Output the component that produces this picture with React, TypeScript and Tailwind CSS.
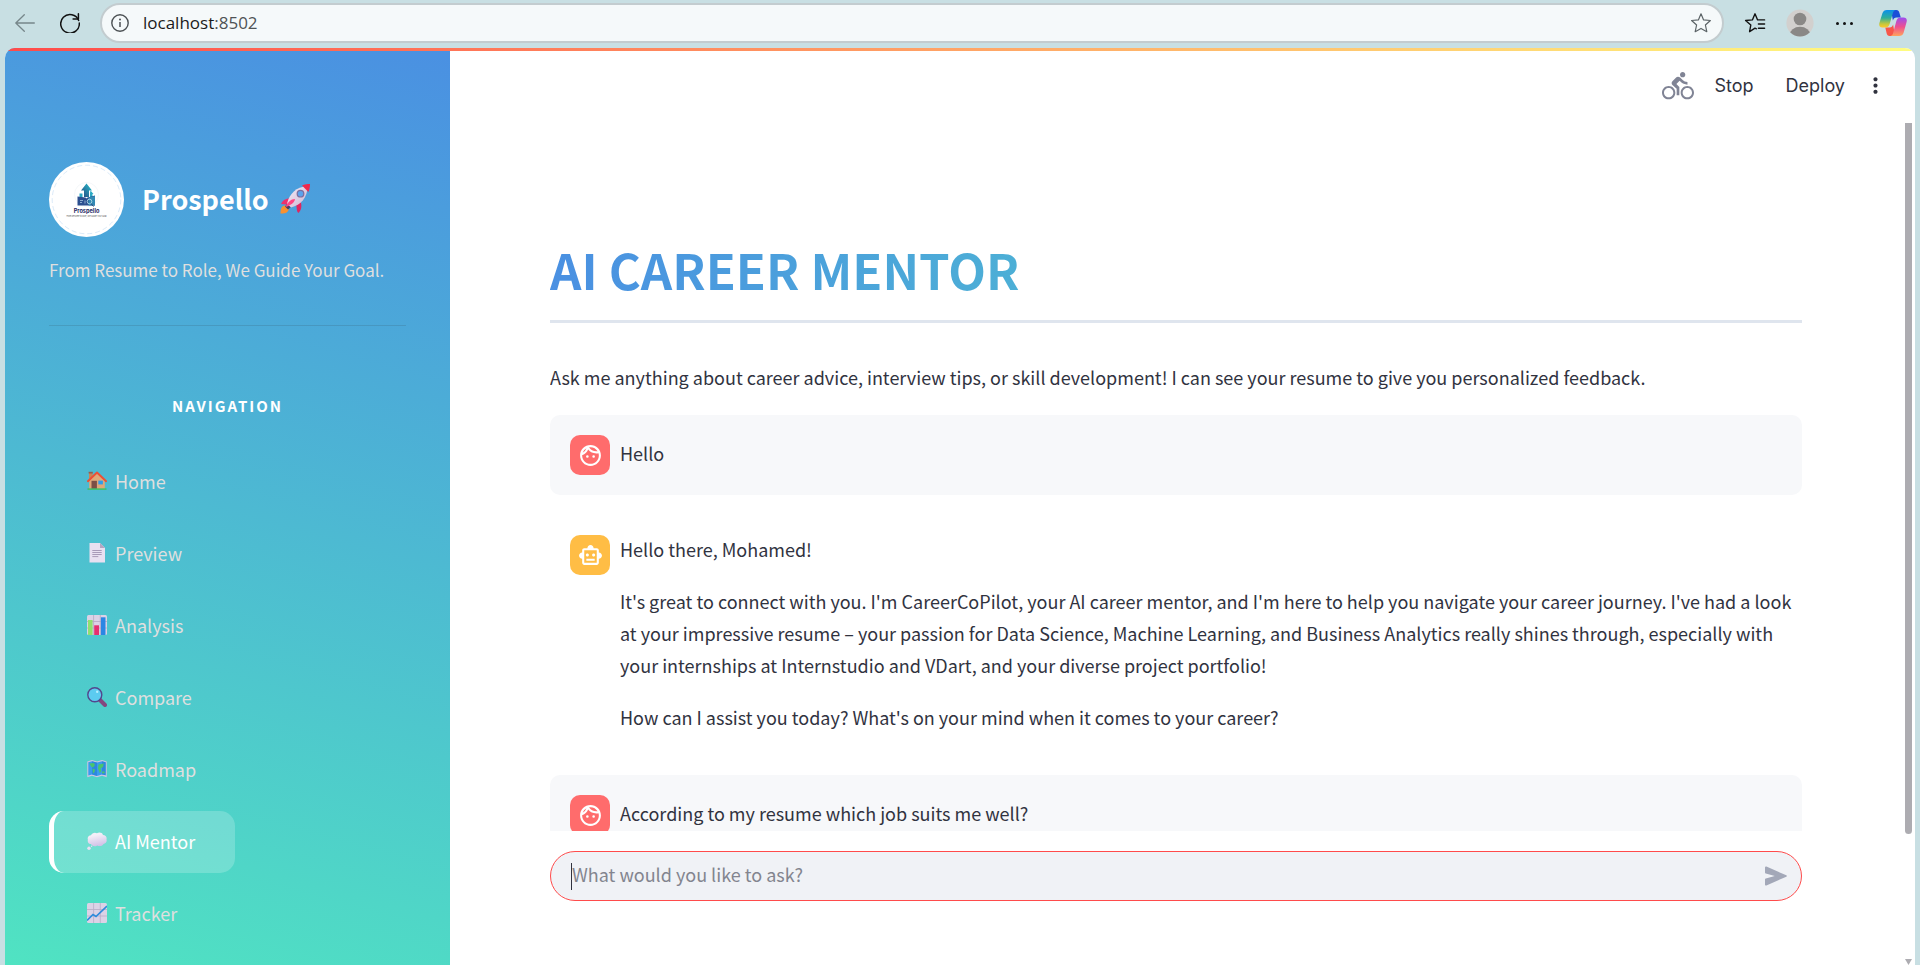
import React from "react";
import { MdDirectionsBike, MdMoreVert, MdOutlineFace, MdOutlineSmartToy } from "react-icons/md";

type IconProps = { className?: string };

function BackIcon() {
  return (
    <svg viewBox="0 0 20 18" className="h-[18px] w-5" fill="none" stroke="#76868a" strokeWidth="1.3" strokeLinecap="round" strokeLinejoin="round">
      <path d="M19.3 9H.8M9.3.7.8 9l8.5 8.3" />
    </svg>
  );
}

function ReloadIcon() {
  return (
    <svg viewBox="0 0 20 20" className="h-5 w-5" fill="none" stroke="#111" strokeWidth="1.5" strokeLinecap="round" strokeLinejoin="round">
      <path d="M18.7 7.4A9.3 9.3 0 1 0 19.3 10" />
      <path d="M18.4.8v5.2h-5.3" />
    </svg>
  );
}

function InfoIcon() {
  return (
    <svg viewBox="0 0 18 18" className="h-[18px] w-[18px]" fill="none" stroke="#4c5154" strokeWidth="1.4">
      <circle cx="9" cy="9" r="8.2" />
      <path d="M9 8v5" strokeWidth="1.5" />
      <circle cx="9" cy="5.5" r="1" fill="#4c5154" stroke="none" />
    </svg>
  );
}

function StarIcon() {
  return (
    <svg viewBox="0 0 22 22" className="h-[22px] w-[22px]" fill="none" stroke="#5c6467" strokeWidth="1.2" strokeLinejoin="round">
      <path d="M11 1.8 13.6 7.9 20.4 8.5 15.4 13 16.8 19.7 11 16.4 5.2 19.7 6.6 13 1.6 8.5 8.4 7.9Z" />
    </svg>
  );
}

function FavoritesIcon() {
  return (
    <svg viewBox="0 0 22 22" className="h-[22px] w-[22px]" fill="none" stroke="#111" strokeWidth="1.4" strokeLinecap="round" strokeLinejoin="round">
      <path d="M12.4 16.8 11 16.2 5.6 19.7 6.8 13 1.6 8.5 8.4 7.9 11 1.8 13.6 7.9H20.6M14.4 12H20.6M14.4 16.2H20.6" />
    </svg>
  );
}

function ProfileIcon() {
  return (
    <svg viewBox="0 0 28 28" className="h-7 w-7">
      <defs>
        <clipPath id="profile-clip"><circle cx="14" cy="14" r="13.6" /></clipPath>
      </defs>
      <circle cx="14" cy="14" r="13.6" fill="#d2d0ce" />
      <g clipPath="url(#profile-clip)" fill="#8a8886">
        <circle cx="14" cy="10" r="6.3" />
        <ellipse cx="14" cy="26" rx="10.4" ry="8.2" />
      </g>
    </svg>
  );
}

function CopilotIcon() {
  return (
    <svg viewBox="0 0 28 26" className="h-[26px] w-7">
      <defs>
        <linearGradient id="cp-left" x1="0" y1="0" x2="0" y2="1">
          <stop offset="0" stopColor="#0b8fec" />
          <stop offset=".45" stopColor="#2fae9a" />
          <stop offset=".8" stopColor="#c7c83a" />
          <stop offset="1" stopColor="#ffc82c" />
        </linearGradient>
        <linearGradient id="cp-right" x1="0" y1="0" x2="0" y2="1">
          <stop offset="0" stopColor="#9b4df0" />
          <stop offset=".5" stopColor="#ee5090" />
          <stop offset="1" stopColor="#ffa35c" />
        </linearGradient>
      </defs>
      <path d="M12 0h5.5c1.6 0 2.4 1.1 2.8 2.5L21.8 7.5H17.5c-2 0-3 1-3.6 3z" fill="#1b4fd8" />
      <path d="M16 26h-5.5c-1.6 0-2.4-1.1-2.8-2.5L6.3 17.5H10.5c2 0 3-1 3.6-3z" fill="#f7574a" />
      <path d="M8 0H16.5c-1.5.4-2.2 1.6-2.7 3.3L10.8 13.5c-.8 2.7-1.8 4-4.5 4H3.5C.8 17.5-.3 15.500.4 13L3.4 3.3C4.1 1.2 5.6 0 8 0z" fill="url(#cp-left)" />
      <path d="M20 26H11.5c1.5-.4 2.2-1.6 2.7-3.3L17.2 11.5c.8-2.7 1.8-4 4.500-4H24.5c2.7 0 3.8 2 3.1 4.5L24.6 22.7C23.900 24.8 22.4 26 20 26z" fill="url(#cp-right)" />
    </svg>
  );
}

function SendIcon() {
  return (
    <svg viewBox="0 0 22 20" className="h-5 w-[22px]" fill="#a3a8b8">
      <path d="M0 1.4C0 .6.7.2 1.4.5L21.3 9.3c.7.3.7 1.1 0 1.4L1.4 19.5C.7 19.8 0 19.4 0 18.6V13.4c0-.5.3-.9.8-1L9.8 10 .8 7.6C.3 7.5 0 7.1 0 6.6z" />
    </svg>
  );
}

function RocketIcon({ className }: IconProps) {
  return (
    <svg viewBox="0 0 32 32" className={className}>
      <defs>
        <linearGradient id="rk-body" x1="0" y1="0" x2="1" y2="1">
          <stop offset="0" stopColor="#f6ecf8" />
          <stop offset="1" stopColor="#c9b4d0" />
        </linearGradient>
      </defs>
      <path d="M6.5 22.5C2.5 22.5 1.5 26 1.5 30.5 6 30.8 9.5 29.5 9.8 26z" fill="#f9912f" />
      <path d="M11.5 15.5C6.5 15 3.5 17.5 2 21l7 .8z" fill="#ee2f6b" />
      <path d="M16.5 20c1.8 3.5.5 7.5 2.8 10 3-2.5 4-7 2.2-12z" fill="#e02660" />
      <path d="M6 23.5 9 26.5 12 24 8.5 20.5z" fill="#4a3f62" />
      <path d="M8 20.5C10.5 11 17 3.500 28.5 3.5 28.5 14.5 22 22 12 24.5z" fill="url(#rk-body)" />
      <path d="M23 2.6C25.5 1.3 28.5 1 31 1 31 3.5 30.6 6.5 29.4 9z" fill="#f0284c" />
      <circle cx="21.5" cy="10.7" r="3.9" fill="#7c6d9e" />
      <circle cx="21.5" cy="10.7" r="2.7" fill="#5aa2ec" />
      <path d="M16 16c-4 0-7.500 3.500-9.500 8C11 22.5 15.500 20 16 16z" fill="#ff4684" />
    </svg>
  );
}

function HomeEmoji() {
  return (
    <svg viewBox="0 0 20 20" className="h-5 w-5">
      <path d="M2 1.6h3.6v6H2z" fill="#c98555" />
      <path d="M1.6.8h4.2v1.7H1.6z" fill="#8f5f54" />
      <path d="M2.2 9.5 10 2.500l7.8 7V18H2.2z" fill="#e0a878" />
      <path d="M4.5 9.8h5.4V18H4.5z" fill="#7c4f45" />
      <path d="M11.3 9.6h4.6v3.8h-4.6z" fill="#2f9cec" />
      <path d="M.9 10.2 10 1.5l9.1 8.7" fill="none" stroke="#ee4f35" strokeWidth="1.9" strokeLinecap="round" strokeLinejoin="round" />
      <path d="M.5 17.3h19v1.6H.5z" fill="#43c168" />
    </svg>
  );
}

function PageEmoji() {
  return (
    <svg viewBox="0 0 20 20" className="h-5 w-5">
      <path d="M2.5 0H13l5 5v14.5H2.5z" fill="#e9e0f1" />
      <path d="M13 0l5 5h-5z" fill="#b4a6c2" />
      <path d="M5.3 7.5h9.4M5.3 9.5h9.4M5.3 11.5h9.4M5.3 13.6h6" stroke="#a99ab8" strokeWidth="1" />
    </svg>
  );
}

function ChartEmoji() {
  return (
    <svg viewBox="0 0 20 20" className="h-5 w-5">
      <rect width="20" height="20" rx="1.5" fill="#dcd2e6" />
      <path d="M0 6.5h20M0 13h20M6.6 0v20M13.3 0v20" stroke="#b5a8c2" strokeWidth=".8" />
      <path d="M1 5h4.6v15H1z" fill="#8fe070" />
      <path d="M7.2 10.3H12V20H7.2z" fill="#e52f6f" />
      <path d="M13.9 2.3h4.6V20h-4.6z" fill="#2b86e4" />
    </svg>
  );
}

function SearchEmoji() {
  return (
    <svg viewBox="0 0 20 20" className="h-5 w-5">
      <path d="M13 13l5 5" stroke="#84467f" strokeWidth="4" strokeLinecap="round" />
      <circle cx="7.8" cy="7.8" r="7" fill="#5ccbf0" stroke="#53468c" strokeWidth="1.4" />
      <circle cx="10.2" cy="4.8" r="1.2" fill="#b7eeff" />
    </svg>
  );
}

function MapEmoji() {
  return (
    <svg viewBox="0 0 20 20" className="h-5 w-5">
      <path d="M.3 2.5 5 1l5 1.5L15 1l4.7 1.5V18.2L15 16.8l-5 1.5-5-1.5L.3 18.2z" fill="#cfc4e2" />
      <path d="M1.3 3.2 5 2.2l5 1.3 5-1.3 3.7 1v13L15 15.5l-5 1.4-5-1.4-3.7 1.1z" fill="#3a9bef" />
      <path d="M15 2.2l3.7 1v13L15 15.5zM5 2.2l5 1.3v13.4l-5-1.4z" fill="#2477cf" opacity=".55" />
      <path d="M2.3 4.6 6.8 4 8 6 6 8.6 4.6 8 3.5 6.500zM5.5 9.5 8 10.5 7.5 13 6 14.5zM11.5 5.5 16.8 4.5 16 8 13.5 9.5 14.5 12 12.8 14 11 9.5zM15 12.5h2.6v1.8H15z" fill="#49c56e" />
    </svg>
  );
}

function ThoughtEmoji() {
  return (
    <svg viewBox="0 0 20 20" className="h-5 w-5">
      <defs>
        <linearGradient id="cloud" x1="0.3" y1="0" x2="0.6" y2="1">
          <stop offset=".2" stopColor="#f4eff8" />
          <stop offset="1" stopColor="#d0bfe6" />
        </linearGradient>
      </defs>
      <path d="M4 4.2C5 1.8 8 1 10 2.3c2-1.5 5.3-.8 6 1.6 2.5 0 4.2 2.2 3.5 4.5.8 2.3-.8 4.3-3 4.5-1.3 2.4-4.5 2.7-6.3 1.5-2.2 1.6-5.3.8-6.1-1.3C1.7 13 .2 11 .9 8.8.1 6.500 1.6 4.300 4 4.2z" fill="url(#cloud)" />
      <circle cx="2" cy="17.3" r="1.7" fill="#eadff3" />
      <circle cx="4.6" cy="15.2" r=".7" fill="#eadff3" />
    </svg>
  );
}

function TrendEmoji() {
  return (
    <svg viewBox="0 0 20 20" className="h-5 w-5">
      <rect width="20" height="20" rx="1.5" fill="#dcd2e6" />
      <path d="M0 6.5h20M0 13h20M6.6 0v20M13.3 0v20" stroke="#b9acc6" strokeWidth=".8" />
      <path d="M0 17.5 6 11.5 9 13.5 20 3" fill="none" stroke="#2e8bdc" strokeWidth="1.7" />
    </svg>
  );
}

function BrandLogo() {
  return (
    <svg viewBox="0 0 75 75" className="h-[75px] w-[75px] shrink-0" role="img" aria-label="Prospello logo">
      <defs>
        <linearGradient id="logo-arrow" x1="0" y1="1" x2="1" y2="0">
          <stop offset="0" stopColor="#26457f" />
          <stop offset="1" stopColor="#27c3cf" />
        </linearGradient>
      </defs>
      <circle cx="37.5" cy="37.5" r="37.5" fill="#fff" />
      <circle cx="37.5" cy="37.5" r="34.3" fill="none" stroke="#c3dcf3" strokeWidth=".6" strokeDasharray="5 3" />
      <circle cx="37.5" cy="32.5" r="12" fill="none" stroke="#f0f4f6" strokeWidth=".7" />
      <path d="M37.5 21.5 43 28.5H40V35H35V28.5H32z" fill="url(#logo-arrow)" />
      <path d="M30.5 31.5h3V36h-3zM41.5 28.5 44.5 32H43.5V36H41V31z" fill="#2ba9c4" />
      <path d="M28.5 34.5 36.5 35.5 37.5 36.5 38.5 35.5 46 33.5V43.5H28.5z" fill="#2c4f8f" />
      <path d="M39.5 35.5 46 34V43.5H39.5z" fill="#3389b4" />
      <path d="M31 38.5h3M31 40.5h2M36 38.5v3" stroke="#b9d4ea" strokeWidth=".7" />
      <circle cx="40.5" cy="39.5" r="2.3" fill="none" stroke="#bfe6ef" strokeWidth=".8" />
      <path d="m42 41.5 2.5 3" stroke="#27457c" strokeWidth="1" />
      <text x="37.5" y="50.6" textAnchor="middle" fontSize="5.6" fontWeight="700" fill="#272a63" fontFamily="Inter, sans-serif">Prospello</text>
      <text x="37.5" y="54.5" textAnchor="middle" fontSize="2" fill="#555" fontFamily="Inter, sans-serif">From Resume to Role, We Guide Your Goal</text>
    </svg>
  );
}

const navItems = [
  { label: "Home", Icon: HomeEmoji },
  { label: "Preview", Icon: PageEmoji },
  { label: "Analysis", Icon: ChartEmoji },
  { label: "Compare", Icon: SearchEmoji },
  { label: "Roadmap", Icon: MapEmoji },
  { label: "AI Mentor", Icon: ThoughtEmoji, active: true },
  { label: "Tracker", Icon: TrendEmoji },
];

function BrowserBar() {
  return (
    <div className="flex h-12 shrink-0 items-center pb-[2px] pl-[15px] pr-[13px]">
      <button aria-label="Back"><BackIcon /></button>
      <button aria-label="Reload" className="ml-[25px]"><ReloadIcon /></button>
      <div className="ml-5 flex h-10 flex-1 items-center rounded-full border-2 border-[#c3cccf] bg-[#f5f9fa] pr-2.5 pl-[9px]">
        <InfoIcon />
        <span className="flex-1 pl-3.5 font-['Open_Sans',sans-serif] text-[17px] text-[#1b1b1b]">
          localhost<span className="text-[#4f5355]">:8502</span>
        </span>
        <button aria-label="Add to favorites"><StarIcon /></button>
      </div>
      <button aria-label="Favorites" className="ml-5"><FavoritesIcon /></button>
      <button aria-label="Profile" className="ml-5"><ProfileIcon /></button>
      <button aria-label="Settings and more" className="ml-[22px] flex gap-1">
        <span className="size-[3px] rounded-full bg-[#111]" />
        <span className="size-[3px] rounded-full bg-[#111]" />
        <span className="size-[3px] rounded-full bg-[#111]" />
      </button>
      <button aria-label="Copilot" className="ml-[26px]"><CopilotIcon /></button>
    </div>
  );
}

function Sidebar() {
  return (
    <aside className="flex w-[445px] shrink-0 flex-col overflow-hidden bg-[linear-gradient(195deg,#4a90e2,#50e3c2)] px-11 pt-[114px]">
      <div className="flex items-center gap-[18px]">
        <BrandLogo />
        <div className="flex items-center gap-2.5 pb-0.5 text-white">
          <span className="text-[27px] leading-10 font-bold">Prospello</span>
          <RocketIcon className="h-8 w-8" />
        </div>
      </div>
      <p className="mt-[18px] text-[17px] leading-[30px] text-[#dfdfdf]">From Resume to Role, We Guide Your Goal.</p>
      <hr className="mt-10 border-t border-[#31333f]/15" />
      <h2 className="mt-[65px] text-center text-[15px] leading-[30px] font-bold tracking-[2px] text-white">NAVIGATION</h2>
      <nav className="mt-[30px] flex flex-col items-start gap-2.5">
        {navItems.map(({ label, Icon, active }) => (
          <a
            key={label}
            href="#"
            className={
              active
                ? "flex h-[62px] items-center gap-2 rounded-[15px] border-l-[5px] border-white bg-white/20 pr-10 pb-0.5 pl-[33px] text-white"
                : "flex h-[62px] items-center gap-2 rounded-[15px] border-l-[5px] border-transparent pr-10 pb-0.5 pl-[33px] text-[#dfdfdf]"
            }
          >
            <Icon />
            {label}
          </a>
        ))}
      </nav>
    </aside>
  );
}

function UserAvatar() {
  return (
    <span className="flex size-10 shrink-0 items-center justify-center rounded-[10px] bg-[#ff6c6c] text-white">
      <MdOutlineFace size={25} />
    </span>
  );
}

function BotAvatar() {
  return (
    <span className="mt-0.5 flex size-10 shrink-0 items-center justify-center rounded-[10px] bg-[#ffbd45] text-white">
      <MdOutlineSmartToy size={25} />
    </span>
  );
}

function UserMessage({ children }: { children: React.ReactNode }) {
  return (
    <article className="flex items-start gap-2.5 rounded-[10px] bg-[#f7f8fa] p-5">
      <UserAvatar />
      <p className="leading-9">{children}</p>
    </article>
  );
}

export default function App() {
  return (
    <div className="flex h-screen flex-col bg-[#c8dfe3] font-['Noto_Sans_CJK_SC',sans-serif] text-lg leading-8 text-[#31333f]">
      <BrowserBar />
      <div className="relative mx-[5px] flex min-h-0 flex-1 overflow-hidden rounded-t-[10px] bg-white">
        <div className="absolute inset-x-0 top-0 h-[3px] bg-[linear-gradient(90deg,#ff4b4b,#fffd80)]" />
        <Sidebar />
        <main className="flex min-w-0 flex-1 flex-col">
          <header className="flex h-[75px] shrink-0 items-center justify-end pr-[27px] font-['Inter',sans-serif]">
            <MdDirectionsBike size={32} className="text-[#808495]" aria-label="Running" />
            <button className="ml-5">Stop</button>
            <button className="ml-8">Deploy</button>
            <button aria-label="Main menu" className="ml-[18px]"><MdMoreVert size={25} /></button>
          </header>
          <div className="flex min-h-0 flex-1">
            <div className="flex min-w-0 flex-1 flex-col px-[100px]">
              <section className="min-h-0 flex-1 overflow-hidden pt-[113px]">
                <div className="border-b-[3px] border-[#dfe5ee] pb-[18px]">
                  <h1 className="bg-[linear-gradient(90deg,#4a90e2,#50e3c2)] bg-clip-text text-[49px] leading-[66px] font-bold text-transparent">
                    AI CAREER MENTOR
                  </h1>
                </div>
                <p className="mt-[38px]">
                  Ask me anything about career advice, interview tips, or skill development! I can see your resume to give you personalized feedback.
                </p>
                <div className="mt-[22px] flex flex-col gap-5">
                  <UserMessage>Hello</UserMessage>
                  <article className="flex items-start gap-2.5 pt-[18px] pr-2.5 pb-[22px] pl-5">
                    <BotAvatar />
                    <div className="flex min-w-0 flex-1 flex-col gap-5">
                      <p>Hello there, Mohamed!</p>
                      <p>
                        It's great to connect with you. I'm CareerCoPilot, your AI career mentor, and I'm here to help you navigate your career journey. I've had a look at your impressive resume – your passion for Data Science, Machine Learning, and Business Analytics really shines through, especially with your internships at Internstudio and VDart, and your diverse project portfolio!
                      </p>
                      <p>How can I assist you today? What's on your mind when it comes to your career?</p>
                    </div>
                  </article>
                  <UserMessage>According to my resume which job suits me well?</UserMessage>
                </div>
              </section>
              <form className="shrink-0 pt-5 pb-16" onSubmit={(e) => e.preventDefault()}>
                <div className="flex h-[50px] items-center rounded-full border border-[#ff4b4b] bg-[#f0f2f6] pr-3.5 pl-5">
                  <span className="h-[27px] w-px bg-[#31333f]" />
                  <input
                    aria-label="Message"
                    placeholder="What would you like to ask?"
                    className="min-w-0 flex-1 bg-transparent pb-1 leading-8 outline-none placeholder:text-[#83858f]"
                  />
                  <button aria-label="Send message"><SendIcon /></button>
                </div>
              </form>
            </div>
            <div className="flex w-[13px] flex-col items-start justify-between pl-[3px]" aria-hidden="true">
              <div className="h-[711px] w-[7px] rounded-b-full bg-[#adacb1]" />
              <svg viewBox="0 0 7 6" className="h-1.5 w-[7px]"><path d="M0 0h7L3.5 6z" fill="#adacb1" /></svg>
            </div>
          </div>
        </main>
      </div>
    </div>
  );
}
